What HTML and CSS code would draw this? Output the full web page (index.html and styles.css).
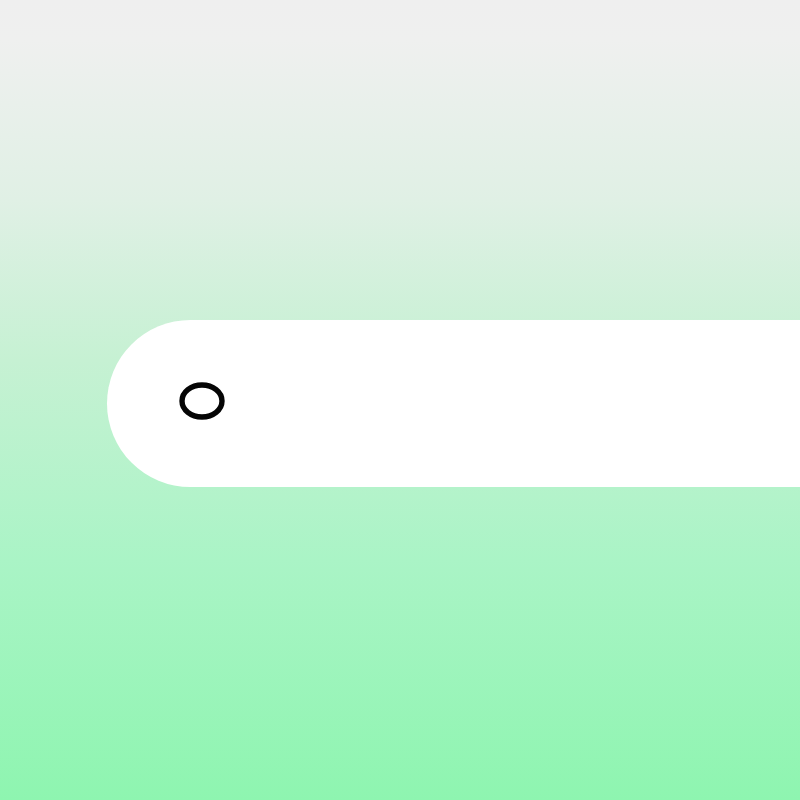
FILE: index.html
```html
<!DOCTYPE html>
<html lang="en">
<head>
<meta charset="utf-8">
<title>Input</title>
<link rel="stylesheet" href="styles.css">
</head>
<body>
<main class="stage">
  <div class="field">
    <svg class="ring" width="46" height="38" viewBox="0 0 46 38" aria-hidden="true">
      <ellipse cx="23" cy="19" rx="20" ry="16" fill="none" stroke="#050505" stroke-width="5.4"/>
    </svg>
  </div>
</main>
</body>
</html>
```
FILE: styles.css
```css
html, body {
  margin: 0;
  padding: 0;
}
body {
  width: 800px;
  height: 800px;
  overflow: hidden;
  font-family: "Liberation Sans", Arial, sans-serif;
  background: linear-gradient(to bottom, #efefef 0%, #eff0ef 5%, #e0f0e5 25%, #c6f1d3 45%, #aaf4c6 70%, #8ef5b0 100%);
}
.stage {
  display: flex;
  flex-direction: column;
  padding-top: 320px;
  padding-left: 107px;
}
.field {
  height: 167px;
  background: #ffffff;
  border-radius: 84px 0 0 84px;
  display: flex;
  align-items: center;
  padding-left: 72px;
}
.ring {
  display: block;
  margin-bottom: 6px;
}
```
